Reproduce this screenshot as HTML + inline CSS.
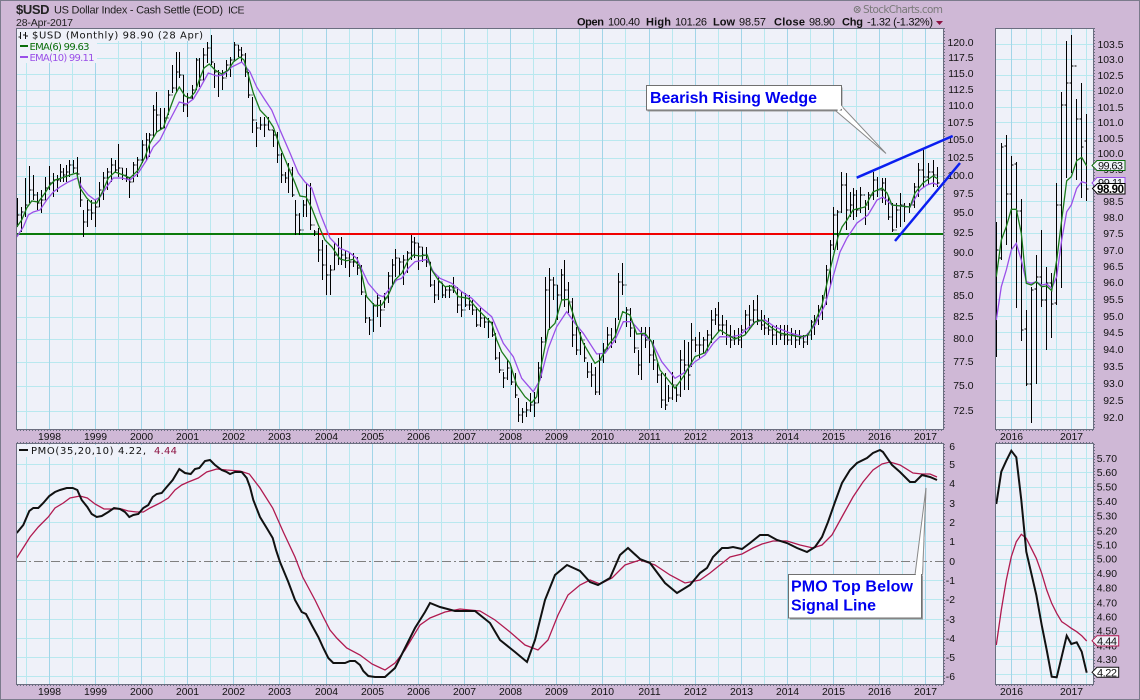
<!DOCTYPE html>
<html><head><meta charset="utf-8"><title>$USD</title>
<style>html,body{margin:0;padding:0;background:#cfb8d6}svg{display:block}text{font-family:"Liberation Sans",Arial,sans-serif}.a text,.a{font-size:10.4px;fill:#111}</style></head><body>
<svg xmlns="http://www.w3.org/2000/svg" width="1140" height="700" viewBox="0 0 1140 700">
<rect x="0.5" y="0.5" width="1139" height="699" fill="#cfb8d6" stroke="#7b7b8c"/>
<rect x="16.5" y="28.5" width="927" height="401" fill="#eff1f9"/>
<rect x="16.5" y="443.5" width="927" height="241" fill="#eff1f9"/>
<rect x="995.5" y="28.5" width="98" height="401" fill="#eff1f9"/>
<rect x="995.5" y="443.5" width="98" height="241" fill="#eff1f9"/>

<g shape-rendering="crispEdges" fill="none">
<path stroke="#b9e8ef" d="M26.5 28V430M72.5 28V430M118.5 28V430M164.5 28V430M210.5 28V430M256.5 28V430M302.5 28V430M349.5 28V430M395.5 28V430M441.5 28V430M487.5 28V430M533.5 28V430M579.5 28V430M625.5 28V430M672.5 28V430M718.5 28V430M764.5 28V430M810.5 28V430M856.5 28V430M902.5 28V430M26.5 444V684M72.5 444V684M118.5 444V684M164.5 444V684M210.5 444V684M256.5 444V684M302.5 444V684M349.5 444V684M395.5 444V684M441.5 444V684M487.5 444V684M533.5 444V684M579.5 444V684M625.5 444V684M672.5 444V684M718.5 444V684M764.5 444V684M810.5 444V684M856.5 444V684M902.5 444V684"/>
<path stroke="#b9e8ef" d="M17 43.5H943M17 58.5H943M17 74.5H943M17 90.5H943M17 106.5H943M17 123.5H943M17 140.5H943M17 158.5H943M17 176.5H943M17 194.5H943M17 213.5H943M17 253.5H943M17 275.5H943M17 296.5H943M17 317.5H943M17 339.5H943M17 362.5H943M17 386.5H943M17 411.5H943M17 464.5H943M17 483.5H943M17 503.5H943M17 522.5H943M17 541.5H943M17 580.5H943M17 599.5H943M17 619.5H943M17 638.5H943M17 657.5H943M17 676.5H943"/>
<path stroke="#a2d5e8" d="M49.5 28V430M95.5 28V430M141.5 28V430M187.5 28V430M233.5 28V430M279.5 28V430M326.5 28V430M372.5 28V430M418.5 28V430M464.5 28V430M510.5 28V430M556.5 28V430M602.5 28V430M649.5 28V430M695.5 28V430M741.5 28V430M787.5 28V430M833.5 28V430M879.5 28V430M925.5 28V430M49.5 444V684M95.5 444V684M141.5 444V684M187.5 444V684M233.5 444V684M279.5 444V684M326.5 444V684M372.5 444V684M418.5 444V684M464.5 444V684M510.5 444V684M556.5 444V684M602.5 444V684M649.5 444V684M695.5 444V684M741.5 444V684M787.5 444V684M833.5 444V684M879.5 444V684M925.5 444V684"/>
<path stroke="#b9e8ef" d="M1026.5 28V430M1041.5 28V430M1056.5 28V430M1086.5 28V430M1026.5 444V684M1041.5 444V684M1056.5 444V684M1086.5 444V684M996 44.5H1093M996 59.5H1093M996 75.5H1093M996 90.5H1093M996 107.5H1093M996 122.5H1093M996 138.5H1093M996 153.5H1093M996 169.5H1093M996 185.5H1093M996 201.5H1093M996 217.5H1093M996 233.5H1093M996 250.5H1093M996 266.5H1093M996 282.5H1093M996 299.5H1093M996 316.5H1093M996 332.5H1093M996 349.5H1093M996 366.5H1093M996 383.5H1093M996 400.5H1093M996 417.5H1093M996 458.5H1093M996 472.5H1093M996 487.5H1093M996 501.5H1093M996 516.5H1093M996 531.5H1093M996 545.5H1093M996 559.5H1093M996 573.5H1093M996 588.5H1093M996 603.5H1093M996 617.5H1093M996 631.5H1093M996 646.5H1093M996 659.5H1093M996 674.5H1093"/>
<path stroke="#a2d5e8" d="M1011.5 28V430M1071.5 28V430M1011.5 444V684M1071.5 444V684"/>
</g>

<!-- horizontal support line -->
<path d="M17 234H318M833 234H943" stroke="#0a7a0a" stroke-width="2" fill="none" shape-rendering="crispEdges"/>
<path d="M318 234H833" stroke="#f00000" stroke-width="2" fill="none" shape-rendering="crispEdges"/>
<path d="M17 561.5H943" stroke="#808080" stroke-width="1" stroke-dasharray="9 3 2 3" fill="none"/>

<!-- main bars: verticals -->
<path transform="translate(.5 0)" shape-rendering="crispEdges" stroke="#000" stroke-width="1" fill="none" d="M17 198V227M21 207V232M25 178V217M29 166V203M33 175V200M37 192V210M41 190V213M45 177V200M49 166V190M53 173V197M57 175V192M60 164V182M63 168V182M66 165V182M69 160V177M73 160V173M77 157V177M80 177V207M83 210V237M87 200V227M91 200V220M95 200V227M99 182V207M103 172V200M107 168V190M111 158V182M115 160V173M118 144V177M122 168V180M126 168V182M129 177V198M133 162V182M137 157V177M142 140V163M146 133V160M149 133V157M153 105V137M156 92V133M160 108V130M164 108V128M168 90V115M172 65V93M176 52V93M179 52V78M183 75V112M187 93V117M192 85V100M196 58V90M199 58V87M203 48V80M207 42V63M211 35V65M214 63V88M218 70V97M222 70V90M226 60V77M230 57V77M234 42V60M238 45V57M241 47V63M245 53V77M248 72V98M252 97V133M256 122V147M260 117V130M264 117V137M268 117V130M273 130V147M277 132V163M281 153V183M285 172V183M288 163V193M292 167V197M295 200V235M299 213V235M303 200V217M306 183V217M310 183V230M314 230V236M318 228V262M322 240V280M326 245V295M330 265V295M334 243V270M338 238V265M341 237V265M345 250V268M349 253V277M353 253V267M357 257V275M361 265V295M365 295V323M369 317V335M373 303V332M377 293V317M380 300V327M384 293V308M388 272V303M392 259V287M395 249V277M399 258V275M403 255V285M407 251V273M411 235V260M414 237V258M418 243V270M422 247V262M426 247V267M430 262V287M434 280V303M438 277V300M442 283V298M445 287V298M449 285V298M453 277V293M457 287V313M461 292V317M465 293V307M469 295V310M472 300V315M476 307V327M480 308V327M484 317V328M488 318V338M492 322V337M495 333V360M499 352V373M503 372V388M507 360V380M511 367V385M515 373V398M518 398V422M522 408V423M526 402V417M530 393V412M534 392V417M538 362V403M541 337V378M545 277V343M549 268V330M553 277V300M557 285V320M561 269V300M564 260V307M568 282V313M572 298V347M576 327V355M580 332V355M584 343V362M587 362V378M591 363V387M595 367V395M599 353V395M603 343V363M607 327V350M611 328V348M615 318V343M618 273V320M622 263V295M626 307V327M630 308V337M634 327V353M638 350V375M641 327V380M645 327V348M649 327V363M653 340V370M657 363V383M661 373V408M665 373V410M668 385V402M672 372V400M676 387V402M680 350V397M684 340V390M688 342V390M691 323V367M695 337V352M699 332V358M703 337V353M707 330V352M711 310V343M715 308V325M718 302V332M722 315V335M726 320V345M730 325V348M734 330V345M738 328V345M741 325V348M745 310V335M749 305V330M753 300V325M757 295V325M761 310V330M764 315V335M768 318V335M772 325V345M776 325V345M780 325V340M784 325V345M787 325V345M791 328V345M795 330V348M799 330V345M803 335V348M807 333V345M811 320V340M814 315V335M818 305V325M822 295V320M826 265V305M830 240V285M833 207V250M837 210V250M841 172V213M846 173V230M850 192V217M853 188V220M856 190V217M860 187V213M865 200V225M868 192V210M873 172V200M877 177V197M882 178V203M885 178V205M888 197V220M892 203V232M896 203V228M900 193V227M904 203V222M909 203V213M914 183V208M918 163V197M923 150V187M928 163V185M933 160V187M937 167V187"/>
<!-- main bars: close/open ticks -->
<path transform="translate(.5 0)" shape-rendering="crispEdges" stroke="#000" stroke-width="1" stroke-dasharray="2 1 1.5 9" fill="none" d="M17 215h4M21 212h4M25 205h4M29 190h4M33 195h4M37 203h4M41 200h4M45 188h4M49 183h4M53 180h4M57 180h3M60 172h3M63 175h3M66 172h3M69 165h4M73 168h4M77 174h3M80 200h3M83 222h4M87 210h4M91 213h4M95 207h4M99 190h4M103 178h4M107 172h4M111 165h4M115 170h3M118 168h4M122 175h4M126 178h3M129 182h4M133 165h4M137 160h5M142 145h4M146 140h3M149 135h4M153 110h3M156 115h4M160 128h4M164 118h4M168 95h4M172 88h4M176 72h3M179 75h4M183 105h4M187 98h5M192 90h4M196 60h3M199 80h4M203 55h4M207 48h4M211 62h3M214 72h4M218 75h4M222 78h4M226 65h4M230 60h4M234 45h4M238 50h3M241 55h4M245 72h3M248 95h4M252 120h4M256 128h4M260 125h4M264 125h4M268 130h5M273 135h4M277 155h4M281 175h4M285 178h3M288 170h4M292 195h3M295 215h4M299 230h4M303 205h3M306 200h4M310 225h4M314 232h4M318 250h4M322 265h4M326 275h4M330 270h4M334 255h4M338 258h3M341 255h4M345 258h4M349 262h4M353 262h4M357 268h4M361 292h4M365 318h4M369 320h4M373 305h4M377 298h3M380 310h4M384 298h4M388 276h4M392 265h3M395 258h4M399 262h4M403 260h4M407 253h4M411 242h3M414 243h4M418 247h4M422 255h4M426 262h4M430 285h4M434 295h4M438 282h4M442 295h3M445 290h4M449 290h4M453 288h4M457 305h4M461 310h4M465 305h4M469 305h3M472 310h4M476 325h4M480 318h4M484 322h4M488 322h4M492 335h3M495 358h4M499 370h4M503 378h4M507 368h4M511 382h4M515 395h3M518 415h4M522 412h4M526 410h4M530 405h4M534 403h4M538 368h3M541 342h4M545 290h4M549 280h4M553 285h4M557 295h4M561 275h3M564 290h4M568 302h4M572 335h4M576 350h4M580 340h4M584 358h3M587 372h4M591 375h4M595 392h4M599 360h4M603 350h4M607 335h4M611 340h4M615 330h3M618 282h4M622 285h4M626 310h4M630 328h4M634 348h4M638 365h3M641 335h4M645 340h4M649 355h4M653 360h4M657 375h4M661 400h4M665 405h3M668 398h4M672 385h4M676 395h4M680 360h4M684 365h4M688 375h3M691 340h4M695 345h4M699 345h4M703 340h4M707 335h4M711 320h4M715 315h3M718 325h4M722 325h4M726 335h4M730 340h4M734 338h4M738 340h3M741 330h4M745 315h4M749 320h4M753 310h4M757 320h4M761 325h3M764 328h4M768 330h4M772 335h4M776 332h4M780 335h4M784 335h3M787 340h4M791 335h4M795 340h4M799 338h4M803 342h4M807 335h4M811 322h3M814 320h4M818 310h4M822 298h4M826 270h4M830 245h3M833 215h4M837 212h4M841 185h5M846 210h4M850 205h3M853 195h3M856 210h4M860 195h5M865 205h3M868 195h5M873 180h4M877 190h5M882 183h3M885 200h3M888 217h4M892 230h4M896 210h4M900 205h4M904 207h5M909 205h5M914 187h4M918 170h5M923 177h5M928 172h5M933 175h4M937 183h2"/>

<polyline fill="none" stroke="#9a4fe8" stroke-width="1.3" points="16.7,237 23.3,227 28.3,215 33.3,212 40,210 46.7,200 53.3,192 60,187 68.3,182 77.3,178 81.7,187 88.3,195 95,200 100,197 106.7,187 113.3,178 121.7,178 130,180 138.3,173 146.7,160 153.3,147 160,140 168.3,123 179.3,102 186.7,104 193.3,99 200,88 208.3,73 216.7,76 223.3,75 231.7,67 241.7,62 250,72 256.7,87 265,100 271.7,110 280,130 290,153 298.3,173 305,182 311.7,188 320,213 330,238 340,248.3 348.3,251.7 356.7,258.3 368.3,283.3 378.3,295 383.3,296.7 390,288.3 396.7,280 401.7,278.3 408.3,268.3 415,261.7 427.3,259.3 433.3,271.7 440,278.3 451.7,283.3 461.7,291.7 471.7,298.3 481.7,308.3 491.7,316.7 503.3,343.3 513.3,356.7 521.7,378.3 533.3,391.7 540,380 548.3,348.3 556.7,326.7 566.7,311.7 575,323.3 583.3,333.3 596.7,354 605,353.3 615,340 623.3,321.7 631.7,321.7 641.7,333.3 651.7,341.7 661.7,361.7 675,378.3 683.3,373.3 695,361.7 705,355 713.3,343.3 720,336.7 730,337 740,335 755,322 765,320 775,327 790,333 805,337 815,325 825,305 835,270 840,252 847,238 857,223 868,215 877,200 883,197 892,205 910,207 920,190 927,185 933,183 938,185"/>
<polyline fill="none" stroke="#1a7a1a" stroke-width="1.3" points="16.7,227 21.7,220 26.7,208 31.7,201 38.3,202 45,193 50,185 55,180 61.7,178 70,175 76.7,173 80,188 86.7,198 91.7,203 96.7,203 103.3,190 108.3,178 115,172 123.3,175 130,178 138.3,170 145,157 150,143 156.7,132 163.3,128 168.3,113 175,95 179.3,87 185,96 190,98 195,92 200,78 204,68 209.3,64 215,70 221.7,74 228.3,70 233.3,62 240,57 244,60 248.3,75 253.3,93 260,110 266.7,117 273.3,127 280,147 288.3,167 295,183 300,196 306,197 311.7,208 318.3,225 325,240 332,247 340,259 346.7,260.7 353.3,259.3 360,266.7 366.7,296.7 375,306 381.7,305 388.3,295 395,280 401.7,273.3 408.3,260 413.3,255 420,256 427.3,255 431.7,270 438.3,280 445,286.7 451.7,286 458.3,296.7 468.3,298.3 476.7,308.3 485,316.7 491.7,323.3 496.7,340 501.7,351.7 510,363.3 516.7,385 525,396.7 531.7,402.7 536.7,396.7 541.7,363.3 548.3,330 555,323.3 561.7,300 568.3,299.3 575,320 583.3,343.3 595,363.3 600,360 608.3,345 615,336.7 622.7,311.7 630,315 636.7,334 645,333.3 651.7,341.7 660,370 668.3,380 675,388.3 683.3,376.7 695,356.7 705,352.7 711.7,340 720,330 728,335 735,339 745,335 755,322 762,320 772,328 780,333 790,335 800,337 808,335 815,322 822,305 830,270 838,237 842,227 847,220 853,210 865,207 873,192 882,188 887,193 892,205 910,207 915,193 923,183 933,176 938,179"/>

<!-- PMO main -->
<polyline fill="none" stroke="#b01a50" stroke-width="1.3" points="16.7,558 25,545 30,537 38.3,527 48.3,517 55,508 63.3,503 70,498 80,496 87.3,498 95,504 104,509 113.3,509 121.7,509 128.3,511 136.7,512 143.3,512 150,508 160,503 168.3,498 175,490 181.7,485 188.3,482 198.3,478 206.7,472 216.7,469 226.7,470 240,471 249.3,474 260,488 272.7,508 283.3,532 295,557 302.7,577 315,600 323.3,617 330,630 336.7,638 346.7,648 360,655 372,664 385,670 395,663 405,650 420,625 430,618 445,612 460,609 480,611 495,620 510,632 525,645 538,650 548,640 558,615 568,595 580,585 590,580 600,584 612,578 625,565 640,560 655,565 670,575 685,583 700,580 710,573 720,565 730,557 742,554 753,548 762,544 773,541 787,541 800,545 813,548 822,545 832,535 843,515 853,497 863,482 873,470 882,464 890,462 900,465 913,473 922,474 930,474 937,477"/>
<polyline fill="none" stroke="#111" stroke-width="2" points="16.7,533 23.3,525 29.3,511 33.3,508 38.3,508 43.3,503 49.3,496 55,492 60,490 66.7,488 72.7,488 77.3,490 81.7,500 87.3,507 91.7,514 96.7,517 101.7,516 108.3,512 114,508 120,509 125,512 129.3,517 133.3,515 138.3,514 143.3,508 148.3,505 152.7,497 156.7,494 161.7,493 166.7,487 172.7,480 179.3,469 185,473 190.7,474 195,469 199.3,468 205,461 210,460 215,465 221.7,470 226.7,472 230,474 235,472 241.7,472 246.7,478 250,487 253.3,500 260,517 266.7,528 272.7,538 276,550 280,562 288.3,582 295,600 301.7,612 306,614 311.7,625 318.3,637 323.3,648 328.3,658 333.3,663 338.3,663 345,663 350,661 355,661 360,665 363.3,671 368.3,676 375,677 385,677 395,668 405,648 415,628 425,612 430,603 440,607 455,611 475,611 490,623 500,640 515,652 527,662 535,640 545,600 555,575 567,565 580,571 590,582 598,585 610,578 620,555 628,548 640,559 650,563 665,583 677,593 690,585 700,573 707,568 713,557 722,548 728,548 733,547 742,549 750,543 760,535 768,535 777,540 787,543 797,548 807,552 815,547 822,537 828,522 835,502 842,483 850,470 857,463 867,458 873,453 880,450 883,452 892,465 900,472 910,482 915,482 922,475 930,477 937,480"/>

<!-- right panel bars -->
<path transform="translate(.5 0)" shape-rendering="crispEdges" stroke="#000" stroke-width="1" fill="none" d="M996 222V357M996 250h2M1001 143V260M1001 258h-2M1001 147h2M1006 135V245M1006 146h-2M1006 194h2M1011 156V250M1011 194h-2M1011 165h2M1016 162V308M1016 164h-2M1016 211h2M1021 199V341M1021 211h-2M1021 330h2M1026 310V386M1026 329h-2M1026 384h2M1031 287V423M1031 384h-2M1031 290h2M1036 255V384M1036 289h-2M1036 277h2M1041 230V307M1041 277h-2M1041 300h2M1046 267V350M1046 300h-2M1046 283h2M1051 273V338M1051 283h-2M1051 304h2M1056 183V305M1056 303h-2M1056 205h2M1061 92V288M1061 205h-2M1061 105h2M1066 41V178M1066 105h-2M1066 83h2M1071 35V173M1071 83h-2M1071 66h2M1076 99V180M1076 66h-2M1076 119h2M1081 83V198M1081 119h-2M1081 147h2M1086 114V201M1086 141h-2M1086 189h2"/>
<polyline fill="none" stroke="#9a4fe8" stroke-width="1.3" points="996.3,320 1001.3,286.7 1006.3,270 1011.3,250 1016.3,243.3 1021.3,260 1026.3,281.7 1031.3,283.3 1036.3,281.7 1041.7,285 1046.7,284 1051.7,288.3 1056.7,276.7 1061.7,240 1066.7,211.7 1071.3,205 1076.7,188.3 1081.7,181.7 1086.7,183.3"/>
<polyline fill="none" stroke="#1a7a1a" stroke-width="1.3" points="996.3,276.7 1001.3,240 1006.3,226.7 1011.3,209.3 1016.3,209.3 1021.3,233.3 1026.3,283.3 1031.3,285 1036.3,281.7 1041.7,286.7 1046.7,286 1051.7,290.7 1056.7,260 1061.7,220 1066.7,180.7 1071.3,176.7 1076.7,160.7 1081.7,157.3 1086.7,166"/>
<polyline fill="none" stroke="#b01a50" stroke-width="1.3" points="996.3,645 1001.3,610 1006.3,580 1011.3,556.7 1016.3,541.7 1021.3,534.3 1026.3,538.3 1031.3,548.3 1036.3,558.3 1041.7,573.3 1046.7,590 1051.7,603.3 1056.7,613.3 1061.7,621.7 1066.7,625 1071.3,628.3 1076.7,631.7 1081.7,635.7 1086.7,641"/>
<polyline fill="none" stroke="#111" stroke-width="2" points="996.3,504 1001.3,471.7 1006.3,460.7 1011.3,450.7 1016.3,457.3 1021.3,500 1026.3,551.7 1031.3,573.3 1036.3,595 1041.7,625 1046.7,650 1051.7,676.7 1056.7,677.3 1061.7,656.7 1066.7,635.7 1071.3,644 1076.7,642.3 1081.7,651.7 1086.7,672.7"/>

<!-- panel borders -->
<g fill="none" stroke="#6b6e80" shape-rendering="crispEdges">
<rect x="16.5" y="28.5" width="927" height="401"/><rect x="16.5" y="443.5" width="927" height="241"/><rect x="995.5" y="28.5" width="98" height="401"/><rect x="995.5" y="443.5" width="98" height="241"/>
<path stroke-dasharray="1 2" d="M17 430.5H943M17 442.5H943M17 685.5H943M996 430.5H1093M996 442.5H1093M996 685.5H1093M944.5 28V430M944.5 444V684M1094.5 28V430M1094.5 444V684"/>
</g>

<!-- legends -->
<rect x="17" y="29" width="188" height="12" fill="#eff1f9"/><rect x="17" y="41" width="80" height="22" fill="#eff1f9"/><rect x="17" y="445" width="162" height="12" fill="#eff1f9"/>
<path d="M20.500 32V39M20 37H18.500M25.500 32V39M23 35h2M26 36h2" stroke="#111" fill="none" stroke-width="1" shape-rendering="crispEdges"/>
<text x="32" y="38.500" font-size="10" textLength="171" fill="#111" style="font-family:'DejaVu Sans',sans-serif">$USD (Monthly) 98.90 (28 Apr)</text>
<path d="M20 46H28" stroke="#0b6e0b" stroke-width="2"/><text x="29.500" y="50" font-size="10" textLength="60" fill="#0b6e0b" style="font-family:'DejaVu Sans',sans-serif">EMA(6) 99.63</text>
<path d="M20 57H28" stroke="#9a4fe8" stroke-width="2"/><text x="29.500" y="61" font-size="10" textLength="65" fill="#9a4fe8" style="font-family:'DejaVu Sans',sans-serif">EMA(10) 99.11</text>
<path d="M19 450H28" stroke="#111" stroke-width="2"/>
<text x="31" y="454" font-size="10" textLength="115" fill="#111" style="font-family:'DejaVu Sans',sans-serif">PMO(35,20,10) 4.22,</text>
<text x="154" y="454" font-size="10" textLength="23" fill="#8b1040" style="font-family:'DejaVu Sans',sans-serif">4.44</text>

<!-- header -->
<text x="16" y="14" font-size="13" font-weight="700" textLength="33.500" fill="#222">$USD</text>
<text x="54" y="13.500" font-size="11" textLength="169" fill="#222">US Dollar Index - Cash Settle (EOD)</text>
<text x="228" y="13.500" font-size="10.500" textLength="16.500" fill="#222">ICE</text>
<text x="16" y="26" font-size="10.500" textLength="57" fill="#222">28-Apr-2017</text>
<circle cx="857.200" cy="9.500" r="3" fill="none" stroke="#777" stroke-width="1"/><path d="M855.800 8l3 3M858.800 8l-3 3" stroke="#777" stroke-width=".8"/>
<text x="863" y="13" font-size="10.500" textLength="80" fill="#7a7a7a" style="font-family:'DejaVu Sans',sans-serif">StockCharts.com</text>
<g font-size="11" fill="#111">
<text x="577" y="25.500" font-weight="700" textLength="27">Open</text><text x="608" y="25.500" textLength="32">100.40</text>
<text x="646" y="25.500" font-weight="700" textLength="25">High</text><text x="675" y="25.500" textLength="32">101.26</text>
<text x="713" y="25.500" font-weight="700" textLength="22">Low</text><text x="739" y="25.500" textLength="27">98.57</text>
<text x="774" y="25.500" font-weight="700" textLength="31">Close</text><text x="809" y="25.500" textLength="26">98.90</text>
<text x="842" y="25.500" font-weight="700" textLength="21">Chg</text><text x="867" y="25.500" textLength="66">-1.32 (-1.32%)</text>
</g>
<path d="M936 21H943L939.500 25Z" fill="#8b1040"/>

<!-- axis labels -->
<g class="a" text-anchor="end">
<text x="973.500" y="46">120.0</text><text x="973.500" y="61">117.5</text><text x="973.500" y="77">115.0</text><text x="973.500" y="93">112.5</text><text x="973.500" y="109">110.0</text><text x="973.500" y="126">107.5</text><text x="973.500" y="143">105.0</text><text x="973.500" y="161">102.5</text><text x="973.500" y="179">100.0</text><text x="973.500" y="197">97.5</text><text x="973.500" y="216">95.0</text><text x="973.500" y="236">92.5</text><text x="973.500" y="256">90.0</text><text x="973.500" y="278">87.5</text><text x="973.500" y="299">85.0</text><text x="973.500" y="320">82.5</text><text x="973.500" y="342">80.0</text><text x="973.500" y="365">77.5</text><text x="973.500" y="389">75.0</text><text x="973.500" y="414">72.5</text>
<text x="955" y="450">6</text><text x="955" y="468">5</text><text x="955" y="487">4</text><text x="955" y="507">3</text><text x="955" y="526">2</text><text x="955" y="545">1</text><text x="955" y="565">0</text><text x="955" y="584">-1</text><text x="955" y="603">-2</text><text x="955" y="623">-3</text><text x="955" y="642">-4</text><text x="955" y="661">-5</text><text x="955" y="680">-6</text>
<text x="1123.500" y="48">103.5</text><text x="1123.500" y="63">103.0</text><text x="1123.500" y="79">102.5</text><text x="1123.500" y="94">102.0</text><text x="1123.500" y="111">101.5</text><text x="1123.500" y="126">101.0</text><text x="1123.500" y="142">100.5</text><text x="1123.500" y="157">100.0</text><text x="1123.500" y="173">99.5</text><text x="1123.500" y="189">99.0</text><text x="1123.500" y="205">98.5</text><text x="1123.500" y="221">98.0</text><text x="1123.500" y="237">97.5</text><text x="1123.500" y="254">97.0</text><text x="1123.500" y="270">96.5</text><text x="1123.500" y="286">96.0</text><text x="1123.500" y="303">95.5</text><text x="1123.500" y="320">95.0</text><text x="1123.500" y="336">94.5</text><text x="1123.500" y="353">94.0</text><text x="1123.500" y="370">93.5</text><text x="1123.500" y="387">93.0</text><text x="1123.500" y="404">92.5</text><text x="1123.500" y="421">92.0</text>
<text x="1117" y="462">5.70</text><text x="1117" y="476">5.60</text><text x="1117" y="490.500">5.50</text><text x="1117" y="505">5.40</text><text x="1117" y="519.500">5.30</text><text x="1117" y="534.500">5.20</text><text x="1117" y="548.500">5.10</text><text x="1117" y="562.500">5.00</text><text x="1117" y="577">4.90</text><text x="1117" y="591.500">4.80</text><text x="1117" y="606.500">4.70</text><text x="1117" y="620.500">4.60</text><text x="1117" y="634.500">4.50</text><text x="1117" y="649.500">4.40</text><text x="1117" y="663">4.30</text>
</g>
<g class="a" text-anchor="middle">
<text x="49.500" y="440">1998</text><text x="95.500" y="440">1999</text><text x="141.500" y="440">2000</text><text x="187.500" y="440">2001</text><text x="233.500" y="440">2002</text><text x="279.500" y="440">2003</text><text x="326.500" y="440">2004</text><text x="372.500" y="440">2005</text><text x="418.500" y="440">2006</text><text x="464.500" y="440">2007</text><text x="510.500" y="440">2008</text><text x="556.500" y="440">2009</text><text x="602.500" y="440">2010</text><text x="649.500" y="440">2011</text><text x="695.500" y="440">2012</text><text x="741.500" y="440">2013</text><text x="787.500" y="440">2014</text><text x="833.500" y="440">2015</text><text x="879.500" y="440">2016</text><text x="925.500" y="440">2017</text>
<text x="49.500" y="695">1998</text><text x="95.500" y="695">1999</text><text x="141.500" y="695">2000</text><text x="187.500" y="695">2001</text><text x="233.500" y="695">2002</text><text x="279.500" y="695">2003</text><text x="326.500" y="695">2004</text><text x="372.500" y="695">2005</text><text x="418.500" y="695">2006</text><text x="464.500" y="695">2007</text><text x="510.500" y="695">2008</text><text x="556.500" y="695">2009</text><text x="602.500" y="695">2010</text><text x="649.500" y="695">2011</text><text x="695.500" y="695">2012</text><text x="741.500" y="695">2013</text><text x="787.500" y="695">2014</text><text x="833.500" y="695">2015</text><text x="879.500" y="695">2016</text><text x="925.500" y="695">2017</text>
<text x="1011.500" y="440">2016</text><text x="1071.500" y="440">2017</text><text x="1011.500" y="695">2016</text><text x="1071.500" y="695">2017</text>
</g>

<!-- value tags -->
<path d="M1092 183 1097 177.500H1125V188H1097Z" fill="#eff1f9" stroke="#9a4fe8"/><text x="1098" y="186.500" font-size="11" fill="#111" textLength="25">99.11</text>
<path d="M1092 165.500 1097 160.500H1125V170.500H1097Z" fill="#eff1f9" stroke="#0b6e0b"/><text x="1098" y="169.500" font-size="11" fill="#111" textLength="25">99.63</text>
<path d="M1092.500 188.500 1097.500 183.500H1125V194H1097.500Z" fill="#fff" stroke="#000"/><text x="1097" y="193" font-size="11.500" font-weight="700" fill="#000" textLength="27">98.90</text>
<path d="M1092 640.700 1097 635.700H1118.700V646H1097Z" fill="#eff1f9" stroke="#b01a50"/><text x="1097" y="645" font-size="11" fill="#111" textLength="20">4.44</text>
<path d="M1092 672.300 1097 667.300H1118.700V677.300H1097Z" fill="#fff" stroke="#111"/><text x="1097" y="676.500" font-size="11" fill="#111" textLength="20">4.22</text>

<!-- wedge lines -->
<path d="M856.700 177.700 952.700 136M895 241 960 163" stroke="#0a1ef0" stroke-width="2.500" fill="none"/>

<!-- callouts -->
<rect x="647.500" y="87.500" width="195" height="24" fill="#999"/>
<path d="M836 111 842 106.500 886 153.500Z" fill="#fff" stroke="#888"/>
<rect x="646.500" y="85.500" width="195" height="24.500" fill="#fff" stroke="#707070"/>
<path d="M836.500 108 840.800 105 843 108 838.500 111Z" fill="#fff"/>
<text x="650" y="103" font-size="16" font-weight="700" fill="#0000f0" textLength="167">Bearish Rising Wedge</text>

<rect x="790" y="576" width="133" height="43.500" fill="#999"/>
<path d="M915 575 922.500 575 926 488Z" fill="#fff" stroke="#888"/>
<path d="M922 575 926.500 488 923 575Z" fill="#999"/>
<rect x="788.500" y="574.500" width="133" height="43.500" fill="#fff" stroke="#707070"/>
<path d="M915.800 573 921 573 921 576 915.800 576Z" fill="#fff"/>
<text x="791" y="591.500" font-size="16" font-weight="700" fill="#0000f0" textLength="122">PMO Top Below</text>
<text x="791" y="610.500" font-size="16" font-weight="700" fill="#0000f0" textLength="85">Signal Line</text>
</svg>
</body></html>
